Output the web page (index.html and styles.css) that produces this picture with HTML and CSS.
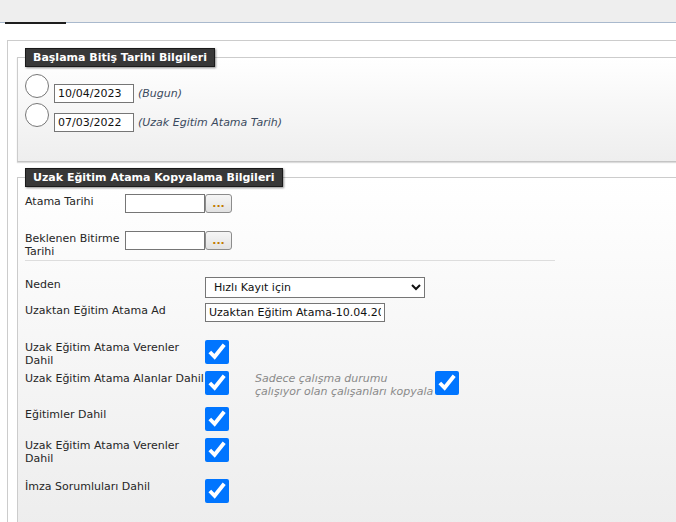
FILE: index.html
```html
<!DOCTYPE html>
<html lang="tr">

<head>
    <meta charset="UTF-8">
    <meta name="viewport" content="width=device-width, initial-scale=1.0">
    <title>Uzak Eğitim Atama Kopyalama</title>
    <link rel="stylesheet" href="styles.css">
</head>

<body>
    <!-- Sekme çubuğu -->
    <div class="topbar">
        <div class="tab-active"></div>
    </div>

    <div class="panel">
        <!-- Tarih seçimi -->
        <fieldset class="box box-dates">
            <legend>Başlama Bitiş Tarihi Bilgileri</legend>
            <div class="date-row">
                <input type="radio" name="baslama" class="radio">
                <input type="text" class="date" value="10/04/2023">
                <span class="hint">(Bugun)</span>
            </div>
            <div class="date-row">
                <input type="radio" name="baslama" class="radio">
                <input type="text" class="date" value="07/03/2022">
                <span class="hint">(Uzak Egitim Atama Tarih)</span>
            </div>
        </fieldset>

        <!-- Kopyalama bilgileri -->
        <fieldset class="box box-copy">
            <legend>Uzak Eğitim Atama Kopyalama Bilgileri</legend>

            <div class="form form-dates">
                <label class="lbl">Atama Tarihi</label>
                <div class="picker">
                    <input type="text" class="date">
                    <button class="pick-btn">...</button>
                </div>

                <label class="lbl">Beklenen Bitirme Tarihi</label>
                <div class="picker">
                    <input type="text" class="date">
                    <button class="pick-btn">...</button>
                </div>
            </div>

            <div class="sep"></div>

            <div class="form form-main">
                <label class="lbl">Neden</label>
                <select class="wide select">
                    <option>Hızlı Kayıt için</option>
                </select>

                <label class="lbl">Uzaktan Eğitim Atama Ad</label>
                <input type="text" class="wide name" value="Uzaktan Eğitim Atama-10.04.2023">

                <label class="lbl">Uzak Eğitim Atama Verenler Dahil</label>
                <input type="checkbox" class="check" checked>

                <label class="lbl">Uzak Eğitim Atama Alanlar Dahil</label>
                <input type="checkbox" class="check" checked>
                <span class="note">Sadece çalışma durumu çalışıyor olan çalışanları kopyala</span>
                <input type="checkbox" class="check check-extra" checked>

                <label class="lbl">Eğitimler Dahil</label>
                <input type="checkbox" class="check" checked>

                <label class="lbl">Uzak Eğitim Atama Verenler Dahil</label>
                <input type="checkbox" class="check" checked>

                <label class="lbl">İmza Sorumluları Dahil</label>
                <input type="checkbox" class="check" checked>
            </div>
        </fieldset>
    </div>
</body>

</html>
```

FILE: styles.css
```css
/* Genel */
body {
    margin: 0;
    font-family: "DejaVu Sans", Verdana, sans-serif;
    font-size: 11px;
    color: #222;
    background: #fff;
    overflow: hidden;
}

input,
select,
button {
    font-family: "DejaVu Sans", Verdana, sans-serif;
    font-size: 11px;
}

/* Sekme çubuğu */
.topbar {
    height: 22px;
    display: flex;
    align-items: flex-end;
    background: #eeeeee;
    border-bottom: 1px solid #a9b9cd;
}

.tab-active {
    width: 61px;
    height: 2px;
    margin: 0 0 -2px 5px;
    background: #1e1e1e;
}

/* Dış panel */
.panel {
    width: 720px;
    margin: 17px 0 0 7px;
    padding: 7px 0 0 9px;
    border: 1px solid #cccccc;
    border-right: 0;
    background: #fff;
}

.box {
    box-sizing: border-box;
    width: 700px;
    margin: 0;
    padding: 7px 7px 0;
    border: 1px solid #cccccc;
    border-right: 0;
}

.box legend {
    margin: 0;
    padding: 0 7px 0 7px;
    height: 17px;
    line-height: 17px;
    background: #383838;
    border: 1px solid #1a1a1a;
    color: #fff;
    font-family: "DejaVu Sans", Verdana, sans-serif;
    font-weight: bold;
    font-size: 11px;
    box-shadow: 1px 1px 2px rgba(0, 0, 0, 0.45);
}

.box-dates {
    padding-bottom: 29px;
    background: linear-gradient(#ffffff, #eeeeee);
    border-bottom-color: #c4c4c4;
    box-shadow: 0 1px 1px #dcdcdc;
}

.box-copy {
    margin-top: 6px;
    height: 420px;
    background: linear-gradient(#ffffff 0%, #eaeaea 100%);
}

/* Tarih satırları */
.date-row {
    height: 29px;
    display: flex;
    align-items: flex-end;
}

.radio {
    align-self: flex-start;
    width: 24px;
    height: 24px;
    margin: 0;
}

.date {
    box-sizing: border-box;
    width: 80px;
    height: 19px;
    margin: 0 0 0 5px;
    padding: 1px 3px;
    border: 1px solid #767676;
    color: #111;
}

.hint {
    margin: 0 0 3px 4px;
    line-height: 13px;
    font-style: italic;
    color: #3b4a5e;
}

/* Form */
.form {
    display: grid;
    align-items: start;
}

.form-dates {
    grid-template-columns: 100px auto;
    grid-template-rows: 37px 29px;
}

.form-dates .date {
    margin-left: 0;
}

.form-main {
    margin-top: 16px;
    grid-template-columns: 180px 50px 180px auto;
    grid-template-rows: 26px 37px 31px 36px 31px 41px 30px;
}

.lbl {
    grid-column: 1;
    padding-top: 1px;
    line-height: 13px;
    color: #262626;
}

.picker {
    display: flex;
}

.pick-btn {
    box-sizing: border-box;
    width: 27px;
    height: 19px;
    padding: 0;
    border: 1px solid #8c8c8c;
    border-radius: 3px;
    background: linear-gradient(#f6f6f6, #e2e2e2);
    color: #c27a00;
    font-weight: bold;
    line-height: 17px;
}

.sep {
    width: 530px;
    border-top: 1px solid #dddddd;
}

.wide {
    grid-column: 2 / 5;
    box-sizing: border-box;
    margin: 0;
    border: 1px solid #767676;
    background: #fff;
    color: #111;
}

.select {
    width: 220px;
    height: 21px;
    padding: 0 0 0 4px;
    border-radius: 0;
}

.name {
    width: 180px;
    height: 19px;
    padding: 1px 3px;
}

.check {
    grid-column: 2;
    width: 24px;
    height: 24px;
    margin: 0;
    accent-color: #0075ff;
}

.note {
    grid-column: 3;
    line-height: 13px;
    padding-top: 1px;
    font-style: italic;
    color: #8a8a8a;
}

.check-extra {
    grid-column: 4;
}
```
